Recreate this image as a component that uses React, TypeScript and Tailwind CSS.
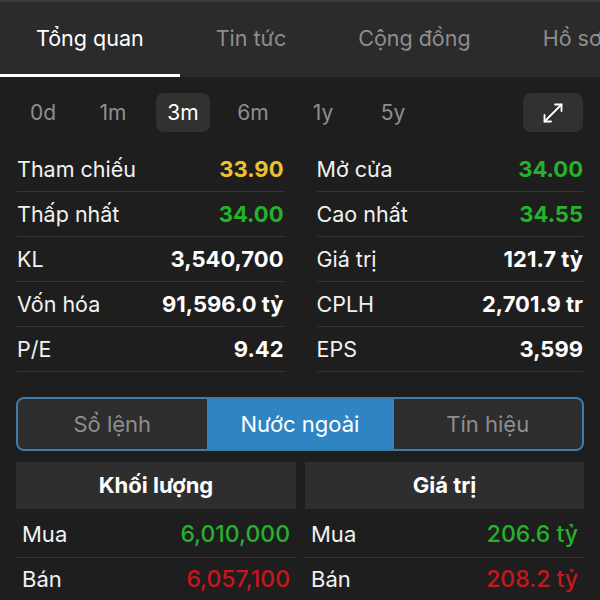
import React from 'react';

const tabs = ['Tổng quan', 'Tin tức', 'Cộng đồng', 'Hồ sơ'];
const periods = ['0d', '1m', '3m', '6m', '1y', '5y'];

interface Stat {
  label: string;
  value: string;
  color?: string;
}

const leftStats: Stat[] = [
  { label: 'Tham chiếu', value: '33.90', color: 'text-[#eec12f]' },
  { label: 'Thấp nhất', value: '34.00', color: 'text-[#25b22c]' },
  { label: 'KL', value: '3,540,700' },
  { label: 'Vốn hóa', value: '91,596.0 tỷ' },
  { label: 'P/E', value: '9.42' },
];

const rightStats: Stat[] = [
  { label: 'Mở cửa', value: '34.00', color: 'text-[#25b22c]' },
  { label: 'Cao nhất', value: '34.55', color: 'text-[#25b22c]' },
  { label: 'Giá trị', value: '121.7 tỷ' },
  { label: 'CPLH', value: '2,701.9 tr' },
  { label: 'EPS', value: '3,599' },
];

const StatColumn = ({ stats }: { stats: Stat[] }) => (
  <div className="flex flex-col">
    {stats.map((s) => (
      <div key={s.label} className="flex h-[45px] items-center justify-between border-b border-[#363636] pt-[1px]">
        <span className="text-[21.5px] text-[#f2f2f2]">{s.label}</span>
        <span className={`text-[22px] font-bold ${s.color ?? 'text-white'}`}>{s.value}</span>
      </div>
    ))}
  </div>
);

const ForeignColumn = ({ title, buy, sell }: { title: string; buy: string; sell: string }) => (
  <div className="flex flex-col">
    <div className="flex h-[47px] items-center justify-center bg-[#2e2e2e] text-[22px] font-bold text-white">
      {title}
    </div>
    <div className="flex h-[49px] items-center justify-between border-b border-[#363636] px-[6px] pt-[2px]">
      <span className="text-[22px] text-[#f2f2f2]">Mua</span>
      <span className="text-[23px] font-medium text-[#25b22c]">{buy}</span>
    </div>
    <div className="flex h-[43px] items-center justify-between px-[6px]">
      <span className="text-[22px] text-[#f2f2f2]">Bán</span>
      <span className="text-[23px] font-medium text-[#c8161d]">{sell}</span>
    </div>
  </div>
);

export default function App() {
  return (
    <div className="h-[600px] w-[600px] overflow-hidden bg-[#1e1e1e] font-['Inter',sans-serif]">
      <div className="flex h-[77px] border-t-2 border-[#3a3a3a] bg-[#2b2b2b]">
        {tabs.map((t, i) => (
          <div key={t} className="relative flex shrink-0 items-center px-9 pb-[3px]">
            <span className={`whitespace-nowrap text-[21.5px] ${i === 0 ? 'text-white' : 'text-[#8e8e8e]'}`}>{t}</span>
            {i === 0 && <div className="absolute bottom-0 left-0 right-0 h-[3px] bg-white" />}
          </div>
        ))}
      </div>

      <div className="flex items-center justify-between px-2 pr-[17px] pt-4">
        <div className="flex">
          {periods.map((p) => (
            <div key={p} className="flex w-[70px] justify-center">
              <div
                className={`flex h-[39px] w-[54px] items-center justify-center rounded-lg text-[21px] ${
                  p === '3m' ? 'bg-[#313131] text-white' : 'text-[#8e8e8e]'
                }`}
              >
                {p}
              </div>
            </div>
          ))}
        </div>
        <div className="flex h-[39px] w-[60px] items-center justify-center rounded-lg bg-[#313131]">
          <svg width="24" height="24" viewBox="0 0 24 24" fill="none" stroke="white" strokeWidth="1.8" strokeLinecap="round" strokeLinejoin="round">
            <path d="M3.5 20.5L20.5 3.5" />
            <path d="M14 3.5h6.5V10" />
            <path d="M3.5 14v6.5H10" />
          </svg>
        </div>
      </div>

      <div className="mt-[15px] grid grid-cols-2 gap-x-[33px] pl-[17px] pr-[17px]">
        <StatColumn stats={leftStats} />
        <StatColumn stats={rightStats} />
      </div>

      <div className="mx-4 mt-[25px] flex h-[54px] overflow-hidden rounded-lg border-2 border-[#3f7aa8] bg-[#2d2d2d]">
        <div className="flex flex-1 items-center justify-center text-[22px] text-[#8e8e8e]">Sổ lệnh</div>
        <div className="flex w-[187px] items-center justify-center bg-[#2f84c4] text-[22px] text-white">Nước ngoài</div>
        <div className="flex flex-1 items-center justify-center text-[22px] text-[#8e8e8e]">Tín hiệu</div>
      </div>

      <div className="mx-4 mt-[11px] grid grid-cols-[280px_1fr] gap-x-[9px]">
        <ForeignColumn title="Khối lượng" buy="6,010,000" sell="6,057,100" />
        <ForeignColumn title="Giá trị" buy="206.6 tỷ" sell="208.2 tỷ" />
      </div>
    </div>
  );
}
